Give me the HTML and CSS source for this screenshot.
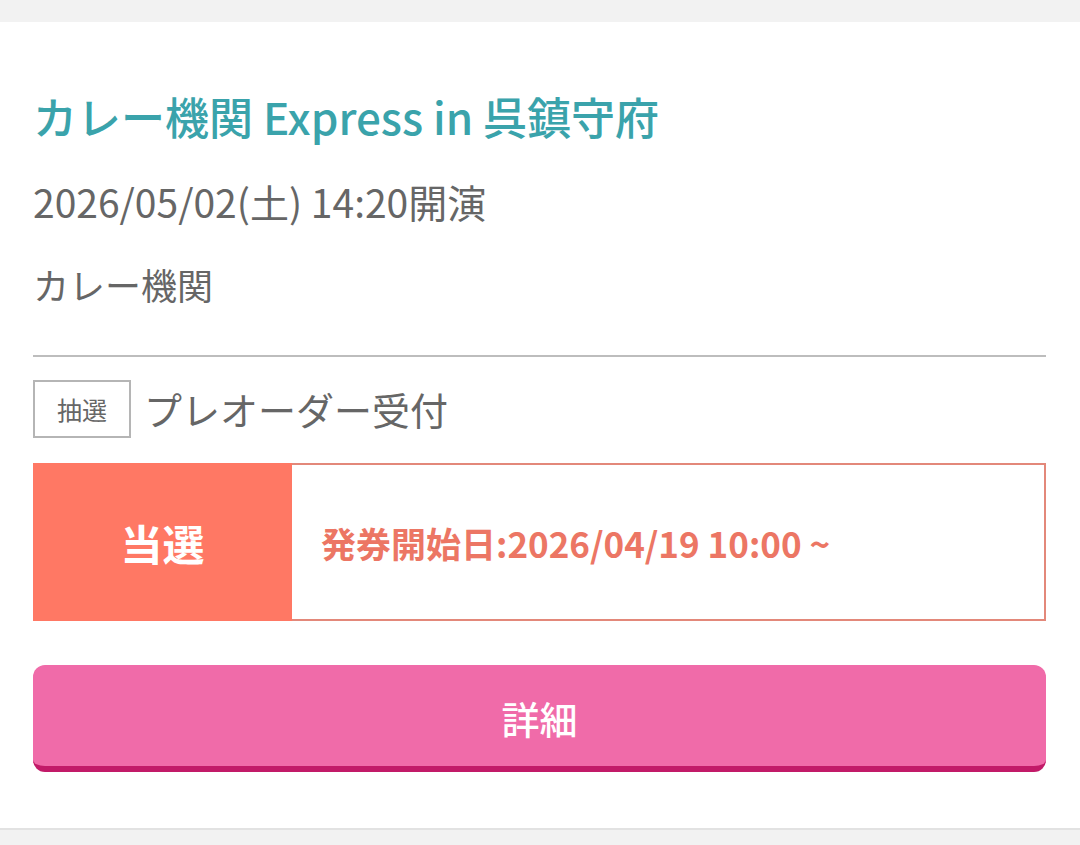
FILE: index.html
```html
<!DOCTYPE html>
<html lang="ja">
<head>
<meta charset="utf-8">
<link rel="stylesheet" href="styles.css">
</head>
<body>
<div class="page">
  <div class="card">
    <h1 class="title">カレー機関 Express in 呉鎮守府</h1>
    <div class="date">2026/05/02(土) 14:20開演</div>
    <div class="artist">カレー機関</div>
    <hr class="sep">
    <div class="kind">
      <span class="badge">抽選</span>
      <span class="kind-name">プレオーダー受付</span>
    </div>
    <div class="result">
      <div class="result-label">当選</div>
      <div class="result-info">発券開始日:2026/04/19 10:00 ~</div>
    </div>
    <a class="detail-btn">詳細</a>
  </div>
</div>
</body>
</html>
```
FILE: styles.css
```css
html, body {
  margin: 0;
  padding: 0;
  background: #f2f2f2;
  font-family: "Noto Sans CJK JP", "Noto Sans", sans-serif;
}
.page {
  padding-top: 22px;
}
.card {
  background: #fff;
  padding: 62px 34px 56px 33px;
  border-bottom: 2px solid #e2e2e2;
  display: flex;
  flex-direction: column;
}
.title {
  margin: 0;
  font-size: 44px;
  font-weight: 500;
  line-height: 64px;
  color: #3aa3ab;
}
.date {
  margin-top: 25px;
  font-size: 39px;
  line-height: 56px;
  color: #666;
}
.artist {
  margin-top: 30px;
  font-size: 36px;
  line-height: 50px;
  color: #666;
}
.sep {
  margin: 46px 0 0 0;
  border: 0;
  border-top: 2px solid #bdbdbd;
  height: 0;
}
.kind {
  margin-top: 23px;
  display: flex;
  align-items: center;
  gap: 13px;
}
.badge {
  box-sizing: border-box;
  width: 98px;
  height: 58px;
  border: 2px solid #b5b5b5;
  display: flex;
  align-items: center;
  justify-content: center;
  font-size: 25px;
  color: #666;
}
.kind-name {
  font-size: 38px;
  color: #666;
  line-height: 58px;
}
.result {
  margin-top: 25px;
  display: flex;
  height: 158px;
  box-sizing: border-box;
  border: 2px solid #e3887a;
}
.result-label {
  width: 259px;
  margin: -2px 0 -2px -2px;
  background: #ff7864;
  color: #fff;
  font-size: 42px;
  font-weight: 700;
  display: flex;
  align-items: center;
  justify-content: center;
}
.result-info {
  display: flex;
  align-items: center;
  padding-left: 29px;
  color: #ec7664;
  font-size: 35px;
  font-weight: 700;
}
.detail-btn {
  margin-top: 44px;
  height: 107px;
  box-sizing: border-box;
  border-radius: 12px;
  background: #f06ba9;
  border-bottom: 6px solid #c21a68;
  color: #fff;
  font-size: 38px;
  font-weight: 500;
  display: flex;
  align-items: center;
  justify-content: center;
  padding-top: 3px;
}
```
